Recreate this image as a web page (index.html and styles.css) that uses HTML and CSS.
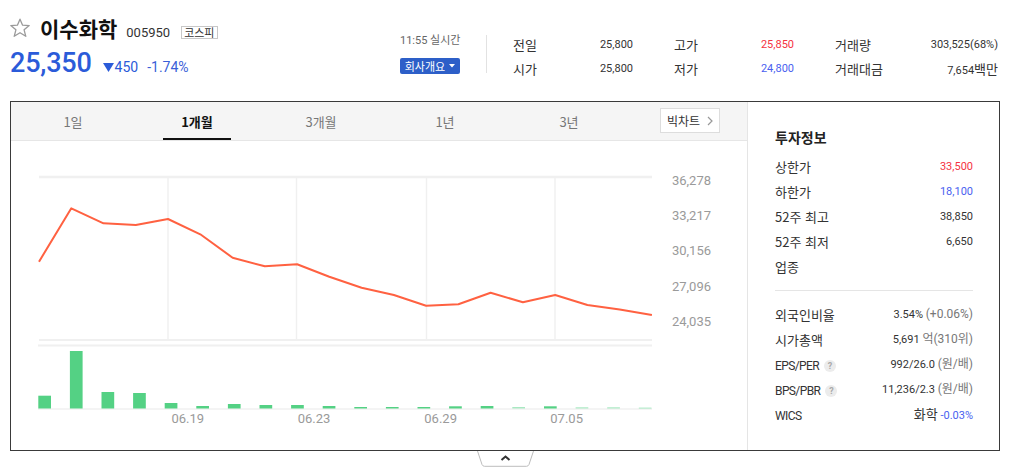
FILE: index.html
```html
<!DOCTYPE html>
<html lang="ko">
<head>
<meta charset="utf-8">
<title>이수화학</title>
<link rel="stylesheet" href="styles.css">
</head>
<body>
<div class="header">
  <div class="title">
    <div class="name-row">
      <svg class="star" width="22" height="20" viewBox="0 0 22 20"><path d="M11 1.2 L13.6 7.2 L20.2 7.6 L15.1 11.8 L16.8 18.3 L11 14.7 L5.2 18.3 L6.9 11.8 L1.8 7.6 L8.4 7.2 Z" fill="none" stroke="#9a9a9a" stroke-width="1.3" stroke-linejoin="round"/></svg>
      <span class="name">이수화학</span>
      <span class="code">005950</span>
      <span class="badge">코스피</span>
    </div>
    <div class="price-row">
      <span class="price">25,350</span>
      <svg class="tri" width="11" height="9" viewBox="0 0 11 9"><path d="M0 0 H11 L5.5 9 Z" fill="#2b5bd9"/></svg>
      <span class="chg">450</span>
      <span class="pct">-1.74%</span>
    </div>
  </div>
  <div class="meta">
    <div class="time">11:55 실시간</div>
    <div class="btn">회사개요 <svg width="6" height="4" viewBox="0 0 6 4"><path d="M0 0 H6 L3 3.5 Z" fill="#fff"/></svg></div>
  </div>
  <div class="quotes">
    <div class="q"><span class="lbl">전일</span><span class="val">25,800</span></div>
    <div class="q"><span class="lbl">고가</span><span class="val up">25,850</span></div>
    <div class="q"><span class="lbl">거래량</span><span class="val">303,525(68%)</span></div>
    <div class="q"><span class="lbl">시가</span><span class="val">25,800</span></div>
    <div class="q"><span class="lbl">저가</span><span class="val down">24,800</span></div>
    <div class="q"><span class="lbl">거래대금</span><span class="val">7,654<span class="ko">백만</span></span></div>
  </div>
</div>

<div class="panel">
  <div class="chart-col">
    <div class="tabs">
      <div class="tab"><span>1일</span></div>
      <div class="tab active"><span>1개월</span></div>
      <div class="tab"><span>3개월</span></div>
      <div class="tab"><span>1년</span></div>
      <div class="tab"><span>3년</span></div>
      <div class="bigchart">빅차트 <svg width="6" height="10" viewBox="0 0 6 10"><path d="M1 1 L5 5 L1 9" fill="none" stroke="#999" stroke-width="1.2"/></svg></div>
    </div>
    <svg class="chart" width="736" height="309" viewBox="11 141 736 309">
      <g stroke="#f0f0f0" fill="none">
        <line x1="39" y1="177" x2="652" y2="177" stroke-width="2.5"/>
        <line x1="168" y1="177" x2="168" y2="340" stroke-width="1.5"/>
        <line x1="296.5" y1="177" x2="296.5" y2="340" stroke-width="1.5"/>
        <line x1="426.5" y1="177" x2="426.5" y2="340" stroke-width="1.5"/>
        <line x1="555" y1="177" x2="555" y2="340" stroke-width="1.5"/>
        <line x1="39" y1="340" x2="652" y2="340" stroke-width="2"/>
        <line x1="38" y1="345.5" x2="652" y2="345.5" stroke-width="2"/>
        <line x1="38" y1="409" x2="652" y2="409" stroke-width="1.5"/>
      </g>
      <polyline fill="none" stroke="#ff6141" stroke-width="2" stroke-linejoin="round" points="39,261.7 71.3,208.3 103.5,223.3 135.8,225 168,219 200.3,234.3 232.6,257.7 264.8,266.3 297.1,264.3 329.3,276.7 361.6,287.7 393.9,295 426.1,305.7 458.4,304.3 490.6,292.7 522.9,302.3 555.2,295 587.4,305 619.7,309.5 651.9,315"/>
      <g fill="#54d184">
        <rect x="38.3" y="395.7" width="12.7" height="12.8"/>
        <rect x="69.9" y="351" width="12.7" height="57.5"/>
        <rect x="101.5" y="392" width="12.7" height="16.5"/>
        <rect x="133.1" y="393" width="12.7" height="15.5"/>
        <rect x="164.7" y="403" width="12.7" height="5.5"/>
        <rect x="196.3" y="406" width="12.7" height="2.5"/>
        <rect x="227.9" y="404" width="12.7" height="4.5"/>
        <rect x="259.5" y="405" width="12.7" height="3.5"/>
        <rect x="291.1" y="405" width="12.7" height="3.5"/>
        <rect x="322.7" y="406" width="12.7" height="2.5"/>
        <rect x="354.3" y="407" width="12.7" height="1.5"/>
        <rect x="385.9" y="407" width="12.7" height="1.5"/>
        <rect x="417.5" y="407" width="12.7" height="1.5"/>
        <rect x="449.1" y="406.3" width="12.7" height="2.2"/>
        <rect x="480.7" y="406" width="12.7" height="2.5"/>
        <rect x="544" y="406.3" width="12.7" height="2.2"/>
      </g>
      <g fill="#a9e8c2">
        <rect x="512.3" y="407" width="12.7" height="1.5"/>
        <rect x="575.6" y="407.3" width="12.7" height="1.2"/>
        <rect x="607.2" y="407.3" width="12.7" height="1.2"/>
        <rect x="638.8" y="407.6" width="12.7" height="1"/>
      </g>
      <g class="axis" text-anchor="end">
        <text x="711" y="185.3">36,278</text>
        <text x="711" y="220">33,217</text>
        <text x="711" y="255.3">30,156</text>
        <text x="711" y="290.5">27,096</text>
        <text x="711" y="326.3">24,035</text>
      </g>
      <g class="axis">
        <text x="171.5" y="422.8">06.19</text>
        <text x="297.7" y="422.8">06.23</text>
        <text x="424.3" y="422.8">06.29</text>
        <text x="550.3" y="422.8">07.05</text>
      </g>
    </svg>
  </div>
  <div class="info">
    <h3>투자정보</h3>
    <div class="row"><span>상한가</span><span class="num up">33,500</span></div>
    <div class="row"><span>하한가</span><span class="num down">18,100</span></div>
    <div class="row"><span>52주 최고</span><span class="num">38,850</span></div>
    <div class="row"><span>52주 최저</span><span class="num">6,650</span></div>
    <div class="row"><span>업종</span><span></span></div>
    <div class="sep"></div>
    <div class="row"><span>외국인비율</span><span class="num">3.54% <em>(+0.06%)</em></span></div>
    <div class="row"><span>시가총액</span><span class="num">5,691 <em>억(310위)</em></span></div>
    <div class="row"><span class="en">EPS/PER <i class="help">?</i></span><span class="num">992/26.0 <em>(원/배)</em></span></div>
    <div class="row"><span class="en">BPS/PBR <i class="help">?</i></span><span class="num">11,236/2.3 <em>(원/배)</em></span></div>
    <div class="row"><span class="en">WICS</span><span class="num"><span class="ko">화학</span> <span class="down">-0.03%</span></span></div>
  </div>
</div>
<div class="fold">
  <svg width="57" height="16" viewBox="0 0 57 16"><path d="M0.5 0 L5 13.5 Q5.8 15.3 7.5 15.3 L49.5 15.3 Q51.2 15.3 52 13.5 L56.5 0" fill="#fff" stroke="#bdbdbd" stroke-width="1"/><path d="M24.5 9 L28.5 5.5 L32.5 9" fill="none" stroke="#333" stroke-width="2"/></svg>
</div>
</body>
</html>
```

FILE: styles.css
```css
body {
  margin: 0;
  font-family: Roboto, "Noto Sans CJK KR", sans-serif;
  color: #333;
  background: #fff;
}

.ko {
  font-family: "Noto Sans CJK KR", sans-serif;
}

.header {
  display: flex;
  align-items: flex-start;
  height: 101px;
  padding-left: 10px;
  box-sizing: border-box;
}

.title {
  width: 390px;
  padding-top: 17px;
}

.name-row {
  display: flex;
  align-items: baseline;
  height: 22px;
  line-height: 22px;
}

.star {
  align-self: center;
  margin-left: -1px;
}

.name {
  margin-left: 9px;
  font-family: "Noto Sans CJK KR", sans-serif;
  font-size: 21px;
  font-weight: 700;
  color: #111;
}

.code {
  margin-left: 9px;
  font-size: 13px;
  color: #333;
}

.badge {
  margin-left: 11px;
  padding: 0 2px;
  border: 1px solid #c8c8c8;
  font-family: "Noto Sans CJK KR", sans-serif;
  font-size: 11px;
  line-height: 11px;
  color: #333;
}

.price-row {
  display: flex;
  align-items: baseline;
  margin-top: 9px;
  line-height: 30px;
  color: #2b5bd9;
}

.price {
  font-size: 27px;
  font-weight: 500;
  letter-spacing: -0.2px;
}

.tri {
  margin-left: 11px;
  margin-bottom: 1.5px;
}

.chg {
  margin-left: 1px;
  font-size: 14px;
}

.pct {
  margin-left: 9px;
  font-size: 14px;
  color: #3a5fd8;
}

.meta {
  width: 87px;
  height: 38px;
  margin-top: 35px;
  box-sizing: border-box;
  border-right: 1px solid #e2e2e2;
}

.time {
  font-size: 11px;
  line-height: 12px;
  color: #666;
}

.btn {
  display: flex;
  align-items: center;
  justify-content: center;
  gap: 4px;
  width: 60px;
  height: 16px;
  margin-top: 11px;
  background: #2d5fc8;
  border-radius: 2px;
  color: #fff;
  font-family: "Noto Sans CJK KR", sans-serif;
  font-size: 11px;
  line-height: 16px;
}

.quotes {
  display: grid;
  grid-template-columns: 120px 120px 163px;
  grid-auto-rows: 24px;
  column-gap: 41px;
  margin-left: 26px;
  padding-top: 32px;
}

.q {
  display: flex;
  justify-content: space-between;
  align-items: center;
}

.lbl {
  font-family: "Noto Sans CJK KR", sans-serif;
  font-size: 13px;
  color: #333;
}

.val {
  font-size: 11px;
  color: #333;
}

.val .ko {
  font-size: 13px;
}

.up {
  color: #f5333f;
}

.down {
  color: #4a5ff0;
}

.panel {
  display: flex;
  width: 990px;
  height: 350px;
  margin-left: 10px;
  box-sizing: border-box;
  border: 1px solid #3a3a3a;
}

.chart-col {
  display: flex;
  flex-direction: column;
  width: 736px;
}

.tabs {
  display: flex;
  height: 38px;
  background: #f5f5f5;
  border-bottom: 1px solid #e6e6e6;
}

.tab {
  display: flex;
  justify-content: center;
  width: 124px;
  font-family: "Noto Sans CJK KR", sans-serif;
  font-size: 13px;
  color: #777;
}

.tab span {
  display: flex;
  align-items: center;
  padding: 0 18px;
}

.tab.active span {
  padding-top: 2px;
  border-bottom: 2px solid #111;
  color: #111;
  font-weight: 700;
}

.bigchart {
  display: flex;
  align-items: center;
  justify-content: center;
  gap: 7px;
  width: 60px;
  height: 25px;
  margin: 6px 0 0 29px;
  box-sizing: border-box;
  border: 1px solid #ddd;
  background: #fff;
  font-family: "Noto Sans CJK KR", sans-serif;
  font-size: 12px;
  color: #333;
}

.chart {
  display: block;
}

.axis {
  font-family: Roboto, sans-serif;
  font-size: 13px;
  fill: #9a9a9a;
}

.info {
  flex: 1;
  padding: 25px 26px 0 27px;
  border-left: 1px solid #e5e5e5;
}

.info h3 {
  margin: 0 0 7px;
  font-family: "Noto Sans CJK KR", sans-serif;
  font-size: 14px;
  line-height: 20px;
  font-weight: 700;
  color: #222;
}

.row {
  display: flex;
  justify-content: space-between;
  align-items: center;
  height: 25px;
  line-height: 16px;
  font-family: "Noto Sans CJK KR", sans-serif;
  font-size: 13px;
  color: #333;
}

.row .num {
  font-family: Roboto, "Noto Sans CJK KR", sans-serif;
  font-size: 11px;
}

.row .num em {
  font-style: normal;
  color: #777;
  font-size: 12px;
}

.row .num .ko {
  font-size: 13px;
}

.row .en {
  display: flex;
  align-items: center;
  padding-top: 3px;
  font-family: Roboto, sans-serif;
  font-size: 12px;
  letter-spacing: -0.6px;
}

.help {
  display: inline-flex;
  align-items: center;
  justify-content: center;
  width: 12px;
  height: 12px;
  margin-left: 5px;
  border-radius: 50%;
  background: #ececec;
  color: #aaa;
  font-style: normal;
  font-size: 9px;
  font-weight: 700;
  letter-spacing: 0;
}

.sep {
  height: 1px;
  margin: 11px 0 11px;
  background: #e5e5e5;
}

.fold {
  margin-left: 477px;
  line-height: 0;
}
```
